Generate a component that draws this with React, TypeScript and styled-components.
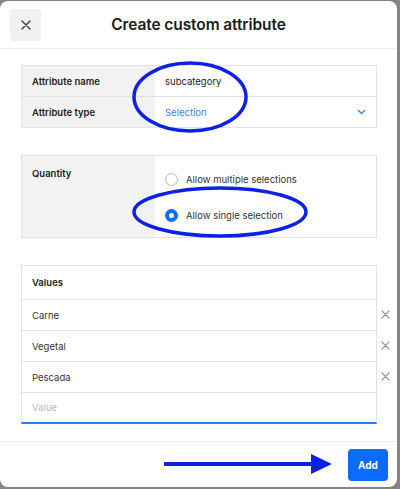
import React from 'react';
import styled, { createGlobalStyle } from 'styled-components';

const GlobalStyle = createGlobalStyle`
  html, body {
    margin: 0;
    padding: 0;
    background: #858585;
    font-family: Inter, "Noto Sans", sans-serif;
    color: #222;
  }
`;

const Cross = ({ size = 10, color = '#333', width = 1.4 }: { size?: number; color?: string; width?: number }) => (
    <svg width={size} height={size} viewBox="0 0 10 10">
        <path d="M1 1 L9 9 M9 1 L1 9" stroke={color} strokeWidth={width} strokeLinecap="round" />
    </svg>
);

export default function App() {
    const values = ['Carne', 'Vegetal', 'Pescada'];

    return (
        <>
            <GlobalStyle />
            <Modal>
                <Header>
                    <CloseButton><Cross size={10} color="#333" width={1.3} /></CloseButton>
                    <Title>Create custom attribute</Title>
                    <span />
                </Header>

                <Body>
                    <Table>
                        <Row>
                            <Label>Attribute name</Label>
                            <Cell>subcategory</Cell>
                        </Row>
                        <Row>
                            <Label>Attribute type</Label>
                            <Cell $blue>
                                Selection
                                <svg width="9" height="6" viewBox="0 0 9 6">
                                    <path d="M1 1 L4.5 4.5 L8 1" fill="none" stroke="#3a85f2" strokeWidth="1.4" />
                                </svg>
                            </Cell>
                        </Row>
                    </Table>

                    <Table>
                        <Row $tall>
                            <Label $top>Quantity</Label>
                            <Options>
                                <Option><Radio /> Allow multiple selections</Option>
                                <Option><Radio $checked /> Allow single selection</Option>
                            </Options>
                        </Row>
                    </Table>

                    <ValueList>
                        <ValueHeader>Values</ValueHeader>
                        {values.map((v) => (
                            <ValueRow key={v}>
                                <ValueBox>{v}</ValueBox>
                                <Remove><Cross size={9} color="#888" width={1.2} /></Remove>
                            </ValueRow>
                        ))}
                        <ValueRow>
                            <ValueInput>Value</ValueInput>
                        </ValueRow>
                    </ValueList>
                </Body>

                <Footer>
                    <AddButton>Add</AddButton>
                </Footer>

                <Annotations width="397" height="486" viewBox="0 0 397 486">
                    <ellipse cx="190" cy="96" rx="56" ry="34" fill="none" stroke="#0a22e6" strokeWidth="3.5" />
                    <ellipse cx="220" cy="211" rx="86" ry="24" fill="none" stroke="#0a22e6" strokeWidth="3.5" />
                    <line x1="164" y1="463" x2="314" y2="463" stroke="#0a22e6" strokeWidth="4" />
                    <polygon points="311,453 332,463 311,473" fill="#0a22e6" />
                </Annotations>
            </Modal>
        </>
    );
}

const Modal = styled.div`
  position: relative;
  width: 397px;
  height: 486px;
  margin-top: 1px;
  background: #fff;
  border-radius: 8px;
  display: flex;
  flex-direction: column;
  overflow: hidden;
`;

const Header = styled.div`
  height: 47px;
  flex: none;
  display: grid;
  grid-template-columns: 1fr auto 1fr;
  align-items: center;
  padding: 0 10px;
  border-bottom: 1px solid #ececec;
`;

const CloseButton = styled.div`
  width: 31px;
  height: 32px;
  border-radius: 4px;
  background: #f1f1f1;
  display: flex;
  align-items: center;
  justify-content: center;
`;

const Title = styled.div`
  font-size: 15.5px;
  font-weight: 600;
  color: #1c1c1c;
  letter-spacing: -0.1px;
`;

const Body = styled.div`
  flex: 1;
  padding: 16px 20px 0 21px;
  display: flex;
  flex-direction: column;
  gap: 27px;
  border-bottom: 1px solid #ececec;
`;

const Table = styled.div`
  border: 1px solid #e2e2e2;
  display: flex;
  flex-direction: column;
`;

const Row = styled.div<{ $tall?: boolean }>`
  display: grid;
  grid-template-columns: 133px 1fr;
  height: ${(p) => (p.$tall ? '81px' : '30px')};
  & + & {
    border-top: 1px solid #e2e2e2;
  }
`;

const Label = styled.div<{ $top?: boolean }>`
  background: #f2f2f2;
  font-size: 9.5px;
  font-weight: 600;
  padding: ${(p) => (p.$top ? '12px 10px' : '0 10px')};
  display: flex;
  align-items: ${(p) => (p.$top ? 'flex-start' : 'center')};
`;

const Cell = styled.div<{ $blue?: boolean }>`
  font-size: 9.5px;
  color: ${(p) => (p.$blue ? '#3a85f2' : '#222')};
  padding: 0 10px;
  display: flex;
  align-items: center;
  justify-content: space-between;
`;

const Options = styled.div`
  display: flex;
  flex-direction: column;
  padding: 17px 0 0 10px;
  gap: 23px;
`;

const Option = styled.div`
  display: flex;
  align-items: center;
  gap: 8px;
  font-size: 9.5px;
  color: #333;
`;

const Radio = styled.span<{ $checked?: boolean }>`
  width: 13px;
  height: 13px;
  box-sizing: border-box;
  border-radius: 50%;
  border: ${(p) => (p.$checked ? '4px solid #0a6cff' : '1px solid #b8b8b8')};
  background: #fff;
`;

const ValueList = styled.div`
  display: flex;
  flex-direction: column;
`;

const ValueHeader = styled.div`
  box-sizing: border-box;
  height: 35px;
  border: 1px solid #e2e2e2;
  padding: 0 10px;
  font-size: 9.5px;
  font-weight: 600;
  display: flex;
  align-items: center;
`;

const ValueRow = styled.div`
  position: relative;
  margin-top: -1px;
`;

const ValueBox = styled.div`
  box-sizing: border-box;
  height: 32px;
  border: 1px solid #e2e2e2;
  padding: 0 10px;
  font-size: 9.5px;
  color: #333;
  display: flex;
  align-items: center;
`;

const ValueInput = styled(ValueBox)`
  color: #b9b9b9;
  border-bottom: 2px solid #2a7bff;
`;

const Remove = styled.div`
  position: absolute;
  right: -13px;
  top: 11px;
  display: flex;
`;

const Footer = styled.div`
  height: 45px;
  flex: none;
  display: flex;
  align-items: center;
  justify-content: flex-end;
  padding: 0 9px 0 0;
`;

const AddButton = styled.div`
  width: 40px;
  height: 32px;
  border-radius: 4px;
  background: #0a6cff;
  color: #fff;
  font-size: 10px;
  font-weight: 700;
  display: flex;
  align-items: center;
  justify-content: center;
`;

const Annotations = styled.svg`
  position: absolute;
  left: 0;
  top: 0;
  pointer-events: none;
`;
